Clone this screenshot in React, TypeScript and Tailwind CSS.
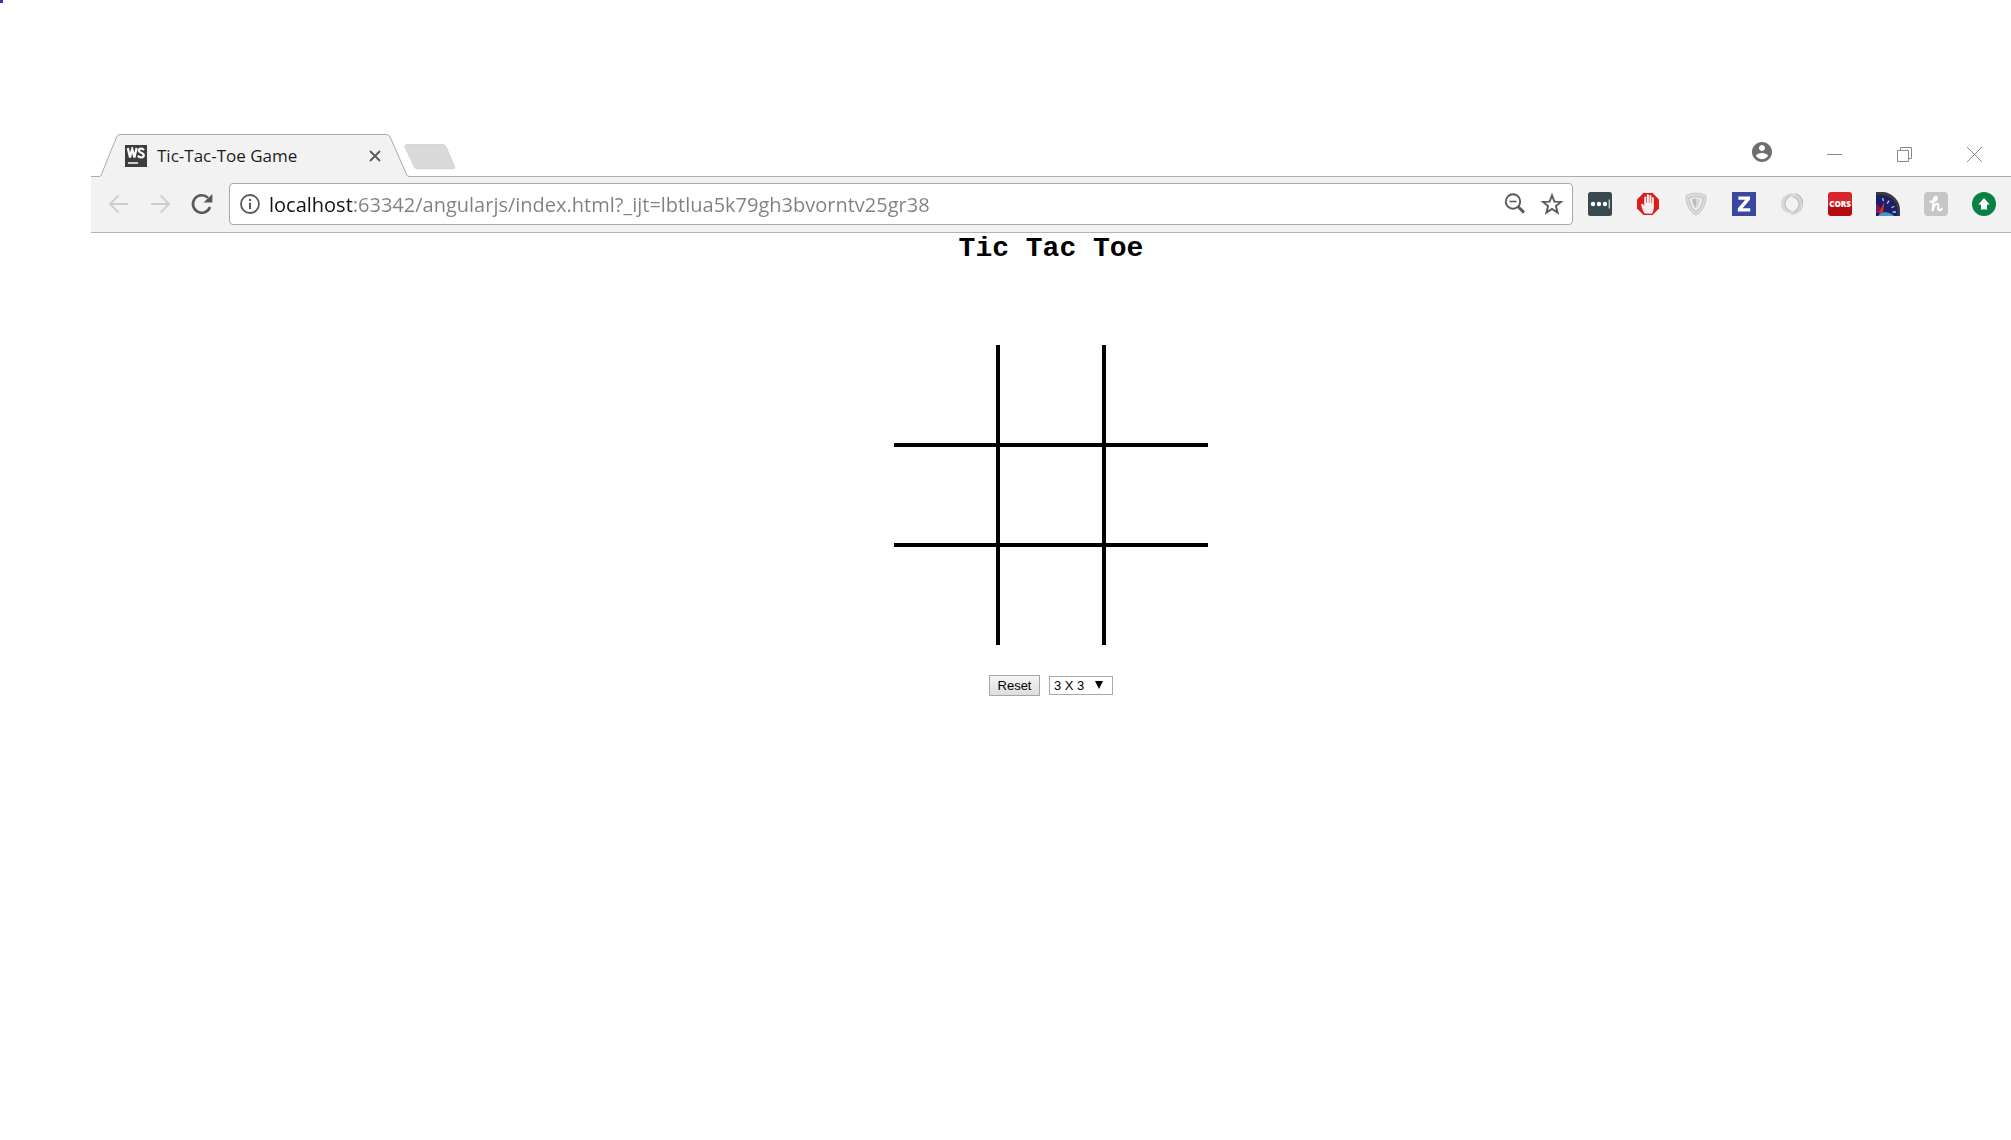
import { useState } from "react";
import type { ReactNode } from "react";

const PAGE_URL =
  "localhost:63342/angularjs/index.html?_ijt=lbtlua5k79gh3bvorntv25gr38";

function TabShape() {
  return (
    <svg
      className="absolute inset-0 h-full w-full"
      viewBox="0 0 312 43"
      preserveAspectRatio="none"
      aria-hidden="true"
    >
      <path
        d="M0 42.5 C1.6 42.5 2 41.6 2.6 40 L17.6 3 Q18.8 .5 21 .5 H287.5 Q290 .5 291.1 3 L307.4 40 C308.1 41.8 308.6 42.5 311 42.5 H312 V43 H0Z"
        fill="#f2f2f2"
      />
      <path
        d="M0 42.5 C1.6 42.5 2 41.6 2.6 40 L17.6 3 Q18.8 .5 21 .5 H287.5 Q290 .5 291.1 3 L307.4 40 C308.1 41.8 308.6 42.5 311 42.5 H312"
        fill="none"
        stroke="#a9a9a9"
      />
    </svg>
  );
}

function WebStormIcon() {
  return (
    <span className="flex h-[22px] w-[22px] bg-[#3d3d3d] p-[2px]">
      <svg viewBox="0 0 18 18" className="h-[18px] w-[18px]" fill="none" stroke="#fff" strokeWidth="2.2">
        <path d="M.8 1 L3 10.4 L5.2 2 L7.4 10.4 L9.6 1" />
        <path d="M17 3 C15.5 1 11.8 1 11.8 3.6 C11.8 6.2 16.8 5.2 16.8 8.2 C16.8 11 12.4 10.8 10.8 8.8" />
        <path d="M1 16 H11" strokeWidth="1.5" />
      </svg>
    </span>
  );
}

function ToolButton({ label, children }: { label: string; children: ReactNode }) {
  return (
    <button type="button" aria-label={label} className="flex h-6 w-6 shrink-0 items-center justify-center">
      {children}
    </button>
  );
}

function Extensions() {
  return (
    <div className="flex items-center gap-6">
      <ToolButton label="Password manager">
        <svg viewBox="0 0 24 24" className="h-6 w-6">
          <rect width="24" height="24" rx="2.5" fill="#3a4851" />
          <g fill="#fff">
            <circle cx="5" cy="12" r="2.2" />
            <circle cx="11" cy="12" r="2.2" />
            <circle cx="17" cy="12" r="2.2" />
            <rect x="20.7" y="7.5" width="1" height="9" />
          </g>
        </svg>
      </ToolButton>
      <ToolButton label="Ad blocker">
        <svg viewBox="0 0 24 24" className="h-6 w-6">
          <path d="M7.5 1 H16.5 L23 7.5 V16.5 L16.5 23 H7.5 L1 16.5 V7.5Z" fill="#de1a1c" />
          <path
            d="M8.6 21.4 C7 19.4 6.2 16.6 5.2 13.2 C4.8 11.6 6.6 11 7.4 12.6 L8.2 14 V5.6 C8.2 4 10.2 4 10.2 5.6 V11 H10.8 V3.4 C10.8 1.8 12.9 1.8 12.9 3.4 V11 H13.4 V4.2 C13.4 2.6 15.4 2.6 15.4 4.2 V11.4 H15.9 V6.2 C15.9 4.8 17.9 4.8 17.9 6.2 V15 C17.9 18 17 20 15.8 21.8Z"
            fill="#f6eeee"
          />
        </svg>
      </ToolButton>
      <ToolButton label="Privacy shield">
        <svg viewBox="0 0 24 24" className="h-6 w-6">
          <path d="M12 1.2 C15 1.2 19 2 22 3.6 C22 13 18 20 12 23.2 C6 20 2 13 2 3.6 C5 2 9 1.2 12 1.2Z" fill="#dcdcdc" stroke="#c6c6c6" />
          <path d="M12 4.5 C14.5 4.5 17 5 19 6 C18.6 12 16 17 12 19.8 C8 17 5.4 12 5 6 C7 5 9.5 4.5 12 4.5Z" fill="#ededed" stroke="#c8c8c8" strokeWidth="1.4" />
          <path d="M12 6.5 C13.2 6.5 14.8 6.8 16 7.3 C15.5 11.3 14.3 14 12 16.2Z" fill="#d6d6d6" />
          <path d="M12 6.5 C10.8 6.5 9.2 6.8 8 7.3 C8.5 11.3 9.7 14 12 16.2Z" fill="#bdbdbd" />
        </svg>
      </ToolButton>
      <ToolButton label="Zotero">
        <svg viewBox="0 0 24 24" className="h-6 w-6">
          <rect width="24" height="24" fill="#3c479f" />
          <path d="M6.4 4.6 H18 V7.4 L10.6 16.2 H18.2 V19.4 H5.8 V16.6 L13.2 7.8 H6.4Z" fill="#fff" />
        </svg>
      </ToolButton>
      <ToolButton label="Swirl extension">
        <svg viewBox="0 0 24 24" className="h-6 w-6">
          <path d="M13 1 C5 1 0 7 1 13 C2 19 7 22 11 21 C14 20.4 12 19 10.6 18.6 C5.6 17 4.4 10 8 6.4 C10 4.4 12 3.6 14 3.6 Z" fill="#d9d9d9" />
          <path d="M11 3.6 C7 4.6 4.2 8.4 5 12.6 C5.6 16 8 18.4 11 19" fill="none" stroke="#c2c2c2" strokeWidth="1.2" />
          <path d="M11 23 C19 23 24 17 23 11 C22 5 17 2 13 3 C10 3.6 12 5 13.4 5.4 C18.4 7 19.6 14 16 17.6 C14 19.6 12 20.4 10 20.4 Z" fill="#d6d6d6" />
          <path d="M13 20.4 C17 19.4 19.8 15.6 19 11.4 C18.4 8 16 5.6 13 5" fill="none" stroke="#c2c2c2" strokeWidth="1.2" />
          <path d="M15 1.4 C20 3 22.8 7 22.6 12" fill="none" stroke="#b4b4b4" strokeWidth="1.1" />
        </svg>
      </ToolButton>
      <button
        type="button"
        className="flex h-6 w-6 shrink-0 items-center justify-center rounded-[3px] bg-linear-to-b from-[#d8262b] from-55% to-[#b50a0f] to-60% font-['Open_Sans',sans-serif] text-[8px] leading-none font-extrabold text-white"
      >
        CORS
      </button>
      <ToolButton label="Speed gauge">
        <svg viewBox="0 0 24 24" className="h-6 w-6">
          <path d="M0 0 H8 C17 1.5 24 9 24 18 V24 H0Z" fill="#3a3a3c" />
          <path d="M0 3 H7 C15 4.5 21.5 11 21.5 19 V24 H0Z" fill="#1a1f66" />
          <path d="M2 24 C4 19.5 13 18.5 18 24Z" fill="#3f9ad8" />
          <path d="M6.6 6 L7.4 9 M13 8.6 L11.2 11.6 M18.4 14.2 L15.4 15.8 M16.5 20 H20" stroke="#b9c2e6" strokeWidth="1.3" />
          <path d="M0 12 L5 16 L3 21 H0Z" fill="#7c1c4c" />
          <path d="M8.4 9.5 L7 21 L2.6 21Z" fill="#e0282c" />
        </svg>
      </ToolButton>
      <ToolButton label="Honey">
        <svg viewBox="0 0 24 24" className="h-6 w-6">
          <rect width="24" height="24" rx="4" fill="#c6c6c6" />
          <path
            d="M6.4 9.6 C9.6 10 13.6 7.8 12.8 5.6 C12 3.8 9.8 5.2 9.6 9 L8.6 18.4 C9.6 14.6 11.4 11.6 13.4 11.8 C15.8 12.2 12.8 17.6 15 18.2 C16.2 18.5 17.2 17.6 17.8 16.6"
            fill="none"
            stroke="#fff"
            strokeWidth="2.1"
            strokeLinecap="round"
            strokeLinejoin="round"
          />
        </svg>
      </ToolButton>
      <ToolButton label="Update available">
        <svg viewBox="0 0 24 24" className="h-6 w-6">
          <circle cx="12" cy="12" r="12" fill="#0b8043" />
          <path d="M12 6 L17.6 12.4 H15 V17.6 H9 V12.4 H6.4Z" fill="#fff" />
        </svg>
      </ToolButton>
    </div>
  );
}

function TabStrip() {
  return (
    <div className="flex h-[43px] border-b border-[#adadad] pl-2">
      <div className="relative -mb-px flex h-[43px] w-[312px] shrink-0 items-center">
        <TabShape />
        <div className="relative flex w-full items-center pr-[30px] pl-[26px]">
          <WebStormIcon />
          <h2 className="ml-[10px] flex-1 font-['Open_Sans',sans-serif] text-[17px] leading-6 whitespace-nowrap text-[#1c1c1c]">
            Tic-Tac-Toe Game
          </h2>
          <button type="button" aria-label="Close tab">
            <svg viewBox="0 0 12 12" className="h-3 w-3" stroke="#5a5a5a" strokeWidth="1.9">
              <path d="M1 1 L11 11 M11 1 L1 11" />
            </svg>
          </button>
        </div>
      </div>
      <button type="button" aria-label="New tab" className="mt-[10px] -ml-[7px] h-[26px] w-[52px]">
        <svg viewBox="0 0 52 26" className="h-[26px] w-[52px]">
          <path d="M3 .5 H39 Q41 .5 42 2.5 L50.5 22.5 Q51.5 24.8 49 24.8 H13.5 Q11 24.8 10 22.5 L.9 3 Q0 .5 3 .5Z" fill="#d9d9d9" stroke="#cbcbcb" strokeWidth=".7" />
        </svg>
      </button>
      <div className="ml-auto flex items-start pt-2 pr-[29px]">
        <button type="button" aria-label="Profile" className="mr-[55px]">
          <svg viewBox="2 2 20 20" className="h-5 w-5" fill="#6e6e6e">
            <path d="M12 2C6.48 2 2 6.48 2 12s4.48 10 10 10 10-4.48 10-10S17.52 2 12 2zm0 3c1.66 0 3 1.34 3 3s-1.34 3-3 3-3-1.34-3-3 1.34-3 3-3zm0 14.2c-2.5 0-4.71-1.28-6-3.22.03-1.99 4-3.08 6-3.08 1.99 0 5.97 1.09 6 3.08-1.29 1.94-3.5 3.22-6 3.22z" />
          </svg>
        </button>
        <div className="flex gap-[55px] pt-[5px]">
          <button type="button" aria-label="Minimize">
            <svg viewBox="0 0 15 15" className="h-[15px] w-[15px]" stroke="#8a8a8a">
              <path d="M0 7.5 H15" />
            </svg>
          </button>
          <button type="button" aria-label="Restore">
            <svg viewBox="0 0 15 15" className="h-[15px] w-[15px]" fill="none" stroke="#8a8a8a">
              <path d="M.5 3.5 H11.5 V14.5 H.5Z M3.5 3.5 V.5 H14.5 V11.5 H11.5" />
            </svg>
          </button>
          <button type="button" aria-label="Close window">
            <svg viewBox="0 0 15 15" className="h-[15px] w-[15px]" stroke="#8a8a8a">
              <path d="M0 0 L15 15 M15 0 L0 15" />
            </svg>
          </button>
        </div>
      </div>
    </div>
  );
}

function Toolbar() {
  const [url, setUrl] = useState(PAGE_URL);
  return (
    <div className="flex h-14 items-center border-b border-[#b3b3b3] bg-[#f2f2f2] pr-[15px] pb-px pl-[15px]">
      <div className="flex shrink-0 items-center gap-[18px]">
        <ToolButton label="Back">
          <svg viewBox="0 0 24 24" className="h-6 w-6" fill="none" stroke="#cfcfcf" strokeWidth="2">
            <path d="M22 12 H4 M12.5 3.5 L4 12 L12.5 20.5" />
          </svg>
        </ToolButton>
        <ToolButton label="Forward">
          <svg viewBox="0 0 24 24" className="h-6 w-6" fill="none" stroke="#cfcfcf" strokeWidth="2">
            <path d="M3 12 H21 M12.5 3.5 L21 12 L12.5 20.5" />
          </svg>
        </ToolButton>
        <ToolButton label="Reload">
          <svg viewBox="0 0 24 24" className="h-6 w-6">
            <path d="M20 15 A8.8 8.8 0 1 1 18 5.8" fill="none" stroke="#5a5a5a" strokeWidth="2.6" />
            <path d="M22.4 2 V10.6 H13.6Z" fill="#5a5a5a" />
          </svg>
        </ToolButton>
      </div>
      <div className="mr-[15px] ml-[15px] flex h-[42px] min-w-0 flex-1 items-center rounded-[4px] border border-[#a9a9a9] bg-white pr-2 pl-[10px]">
        <svg viewBox="0 0 20 20" className="h-5 w-5 shrink-0" fill="none" stroke="#5a5a5a" strokeWidth="1.8" aria-hidden="true">
          <circle cx="10" cy="10" r="9" />
          <path d="M10 8.8 V15 M10 5 V7" strokeWidth="2" />
        </svg>
        <input
          type="text"
          aria-label="Address"
          spellCheck={false}
          value={url}
          onChange={(event) => setUrl(event.target.value)}
          className="ml-[9px] h-8 min-w-0 flex-1 bg-[linear-gradient(to_right,#111_84px,#808080_84px)] bg-clip-text font-['Open_Sans',sans-serif] text-[20px] text-transparent caret-black outline-none"
        />
        <div className="flex shrink-0 items-center gap-[13px]">
          <ToolButton label="Zoom">
            <svg viewBox="0 0 24 24" className="h-6 w-6" fill="none" stroke="#5a5a5a">
              <circle cx="10" cy="9.5" r="7.2" strokeWidth="1.9" />
              <path d="M6.5 9.5 H13.5" strokeWidth="1.6" />
              <path d="M15.2 14.8 L21 20.6" strokeWidth="3" />
            </svg>
          </ToolButton>
          <ToolButton label="Bookmark this page">
            <svg viewBox="0 0 24 24" className="h-6 w-6" fill="none" stroke="#5a5a5a" strokeWidth="1.9">
              <path d="M12 3.4 L14.4 9.6 L21 9.9 L15.9 14.1 L17.6 20.6 L12 17 L6.4 20.6 L8.1 14.1 L3 9.9 L9.6 9.6Z" />
            </svg>
          </ToolButton>
        </div>
      </div>
      <Extensions />
    </div>
  );
}

function Game() {
  const [cells, setCells] = useState<string[]>(() => Array(9).fill(""));
  const [size, setSize] = useState("3 X 3");

  const play = (index: number) => {
    setCells((current) => {
      if (current[index]) return current;
      const mark = current.filter(Boolean).length % 2 ? "O" : "X";
      return current.map((cell, i) => (i === index ? mark : cell));
    });
  };

  return (
    <main className="flex flex-col items-center">
      <h1 className="font-['Liberation_Mono',monospace] text-[28px] leading-8 font-bold text-black">
        Tic Tac Toe
      </h1>
      <div className="mt-20 grid grid-cols-[repeat(3,102px)] grid-rows-[98px_96px_98px] gap-1 bg-black">
        {cells.map((cell, index) => (
          <button
            key={index}
            type="button"
            aria-label={`Cell ${index + 1}`}
            onClick={() => play(index)}
            className="bg-white font-['Liberation_Mono',monospace] text-6xl font-bold"
          >
            {cell}
          </button>
        ))}
      </div>
      <div className="mt-[30px] flex items-center gap-[9px] font-['Liberation_Sans',sans-serif] text-[13px] text-black">
        <button
          type="button"
          onClick={() => setCells(Array(9).fill(""))}
          className="h-[21px] w-[51px] border border-[#a6a6a6] bg-linear-to-b from-[#f6f6f6] to-[#dddddd] leading-none"
        >
          Reset
        </button>
        <div className="relative">
          <select
            aria-label="Board size"
            value={size}
            onChange={(event) => setSize(event.target.value)}
            className="block h-[19px] w-16 appearance-none border border-[#a9a9a9] bg-white pl-1 leading-none"
          >
            <option>3 X 3</option>
          </select>
          <svg viewBox="0 0 8 8" className="pointer-events-none absolute top-[5px] right-[10px] h-2 w-2" aria-hidden="true">
            <path d="M0 0 H8 L4 8Z" fill="#000" />
          </svg>
        </div>
      </div>
    </main>
  );
}

export default function App() {
  return (
    <div className="relative min-h-screen bg-white pt-[134px] pl-[91px]">
      <span className="absolute top-0 left-0 h-[3px] w-[3px] bg-[#3a2fc0]" />
      <TabStrip />
      <Toolbar />
      <Game />
    </div>
  );
}
